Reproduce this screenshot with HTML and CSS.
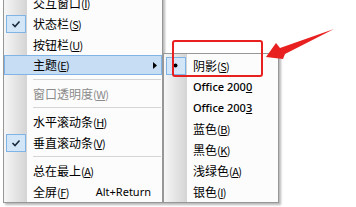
FILE: index.html
```html
<!DOCTYPE html>
<html lang="zh-CN">
<head>
<meta charset="utf-8">
<title>菜单</title>
<link rel="stylesheet" href="styles.css">
</head>
<body>
<div class="stage">
  <div class="menu main">
    <div class="item"><span class="label">交互窗口<span class="acc">(<u>I</u>)</span></span></div>
    <div class="item"><span class="box"><svg width="20" height="18" viewBox="0 0 20 18"><polyline points="6.5,9 9,11.5 13.5,6.5" fill="none" stroke="#1b2a3c" stroke-width="1.6"/></svg></span><span class="label">状态栏<span class="acc">(<u>S</u>)</span></span></div>
    <div class="item"><span class="label">按钮栏<span class="acc">(<u>U</u>)</span></span></div>
    <div class="item hot"><span class="label">主题<span class="acc">(<u>E</u>)</span></span><svg class="arrow" width="4" height="7" viewBox="0 0 4 7"><polygon points="0,0 4,3.5 0,7" fill="#000"/></svg></div>
    <div class="sep"></div>
    <div class="item disabled"><span class="label">窗口透明度<span class="acc">(<u>W</u>)</span></span></div>
    <div class="sep"></div>
    <div class="item"><span class="label">水平滚动条<span class="acc">(<u>H</u>)</span></span></div>
    <div class="item"><span class="box"><svg width="20" height="18" viewBox="0 0 20 18"><polyline points="6.5,9 9,11.5 13.5,6.5" fill="none" stroke="#1b2a3c" stroke-width="1.6"/></svg></span><span class="label">垂直滚动条<span class="acc">(<u>V</u>)</span></span></div>
    <div class="sep"></div>
    <div class="item"><span class="label">总在最上<span class="acc">(<u>A</u>)</span></span></div>
    <div class="item"><span class="label">全屏<span class="acc">(<u>F</u>)</span></span><span class="shortcut">Alt+Return</span></div>
  </div>
  <div class="menu sub">
    <div class="item"><span class="box"><svg width="20" height="18" viewBox="0 0 20 18"><circle cx="9.5" cy="8.5" r="2" fill="#000"/></svg></span><span class="label">阴影<span class="acc">(<u>S</u>)</span></span></div>
    <div class="item"><span class="label latin">Office 200<u>0</u></span></div>
    <div class="item"><span class="label latin">Office 200<u>3</u></span></div>
    <div class="item"><span class="label">蓝色<span class="acc">(<u>B</u>)</span></span></div>
    <div class="item"><span class="label">黑色<span class="acc">(<u>K</u>)</span></span></div>
    <div class="item"><span class="label">浅绿色<span class="acc">(<u>A</u>)</span></span></div>
    <div class="item"><span class="label">银色<span class="acc">(<u>I</u>)</span></span></div>
  </div>
  <div class="mark-box"></div>
  <svg class="mark-arrow" width="356" height="207" viewBox="0 0 356 207">
    <polygon points="266,57 276,43 280,48 334,29 285,54 283,59" fill="#e8201f"/>
  </svg>
</div>
</body>
</html>
```
FILE: styles.css
```css
html, body {
  margin: 0;
  padding: 0;
  background: #ffffff;
}

.stage {
  position: relative;
  width: 356px;
  height: 207px;
  overflow: hidden;
  display: flex;
  align-items: flex-start;
  padding-left: 3px;
  box-sizing: border-box;
  font-family: "Noto Sans CJK SC", "Noto Sans", sans-serif;
  font-size: 12px;
  color: #000;
}

.menu {
  box-sizing: border-box;
  border: 1px solid #979797;
  background:
    linear-gradient(to right, #f6f6f6, #d4d4d4) 0 0 / 23px 100% no-repeat,
    #fcfcfc;
  box-shadow: 2px 2px 2px rgba(0, 0, 0, 0.28);
  display: flex;
  flex-direction: column;
}

.main {
  width: 160px;
  margin-top: -11px;
  padding: 2px 0 0;
}

.sub {
  width: 116px;
  margin-top: 53px;
  padding: 1px 0 0;
}

.item {
  position: relative;
  height: 21px;
  display: flex;
  align-items: center;
  padding-left: 29px;
  box-sizing: border-box;
  line-height: 21px;
  white-space: nowrap;
}

.item.hot {
  background: #c6ddf4;
  box-shadow: inset 0 0 0 1px #80b3e6;
  height: 20px;
  margin-bottom: 1px;
}

.item.disabled {
  color: #8b8b8b;
}

.label {
  flex: 1;
}

.acc {
  font-size: 11px;
  letter-spacing: -0.6px;
}

.latin {
  font-family: "Noto Sans", sans-serif;
  font-size: 11px;
  font-weight: 500;
}

u {
  text-decoration-thickness: 1px;
  text-underline-offset: 1px;
}

.box {
  position: absolute;
  left: 2px;
  top: 2px;
  width: 20px;
  height: 18px;
  box-sizing: border-box;
  border: 1px solid #80b3e6;
  background: #d2e6f8;
}

.box svg {
  position: absolute;
  left: -1px;
  top: -1px;
}

.arrow {
  margin-right: 5px;
}

.shortcut {
  margin-right: 11px;
  font-family: "Noto Sans", sans-serif;
  font-size: 11px;
}

.sep {
  height: 7px;
  display: flex;
  align-items: center;
  padding-left: 29px;
}

.sep::before {
  content: "";
  flex: 1;
  height: 1px;
  background: #d5d5d5;
  margin-right: 1px;
}

.mark-box {
  position: absolute;
  left: 172px;
  top: 40px;
  width: 91px;
  height: 37px;
  box-sizing: border-box;
  border: 2px solid #e8201f;
  border-radius: 3px;
}

.mark-arrow {
  position: absolute;
  left: 0;
  top: 0;
  pointer-events: none;
}
```
